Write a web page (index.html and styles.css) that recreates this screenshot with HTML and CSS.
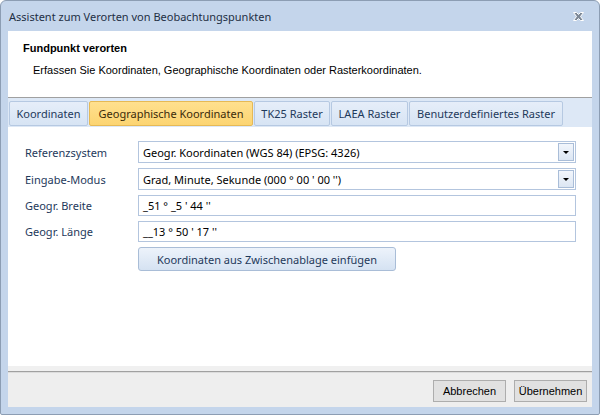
FILE: index.html
```html
<!DOCTYPE html>
<html lang="de">
<head>
<meta charset="utf-8">
<title>Assistent zum Verorten von Beobachtungspunkten</title>
<link rel="stylesheet" href="styles.css">
</head>
<body>
<div class="window">
  <div class="titlebar">
    <span class="title">Assistent zum Verorten von Beobachtungspunkten</span>
    <span class="close" aria-label="Schließen">
      <svg width="13" height="11" viewBox="0 0 13 11">
        <path d="M1.5 1.5 L4.5 1.5 L6.5 3.5 L8.5 1.5 L11.5 1.5 L8.5 5.5 L11.5 9.5 L8.5 9.5 L6.5 7.5 L4.5 9.5 L1.5 9.5 L4.5 5.5 Z" fill="#7d8896" stroke="#ffffff" stroke-width="1" stroke-linejoin="round"/>
      </svg>
    </span>
  </div>
  <div class="client">
    <div class="header">
      <div class="header-title">Fundpunkt verorten</div>
      <div class="header-desc">Erfassen Sie Koordinaten, Geographische Koordinaten oder Rasterkoordinaten.</div>
    </div>
    <div class="tabstrip">
      <div class="tab tab-koord">Koordinaten</div>
      <div class="tab tab-geo active">Geographische Koordinaten</div>
      <div class="tab tab-tk25">TK25 Raster</div>
      <div class="tab tab-laea">LAEA Raster</div>
      <div class="tab tab-user">Benutzerdefiniertes Raster</div>
    </div>
    <div class="panel">
      <div class="form">
        <label class="label">Referenzsystem</label>
        <div class="combo">
          <span class="combo-text">Geogr. Koordinaten (WGS 84) (EPSG: 4326)</span>
          <span class="combo-btn"><span class="arrow"></span></span>
        </div>
        <label class="label">Eingabe-Modus</label>
        <div class="combo">
          <span class="combo-text">Grad, Minute, Sekunde (000 ° 00 ' 00 '')</span>
          <span class="combo-btn"><span class="arrow"></span></span>
        </div>
        <label class="label">Geogr. Breite</label>
        <div class="field">_51 ° _5 ' 44 ''</div>
        <label class="label">Geogr. Länge</label>
        <div class="field">__13 ° 50 ' 17 ''</div>
        <span></span>
        <div class="btn-row"><button class="btn-paste">Koordinaten aus Zwischenablage einfügen</button></div>
      </div>
    </div>
    <div class="footer">
      <button class="btn">Abbrechen</button>
      <button class="btn">Übernehmen</button>
    </div>
  </div>
</div>
</body>
</html>
```
FILE: styles.css
```css
* { box-sizing: border-box; }
html, body {
  margin: 0;
  padding: 0;
  width: 600px;
  height: 415px;
  overflow: hidden;
  background: #ffffff;
}
.window {
  width: 600px;
  height: 415px;
  display: flex;
  flex-direction: column;
  background: #c4d5eb;
  border: 1px solid #8c9db3;
  border-radius: 6px 6px 2px 2px;
  padding: 0 7px 7px 7px;
}
.titlebar {
  height: 30px;
  display: flex;
  align-items: center;
  justify-content: space-between;
  padding: 0 6px 0 1px;
}
.title {
  font-family: "Noto Sans", "Open Sans", sans-serif;
  font-size: 11px;
  color: #1e2f44;
  padding-top: 1px;
}
.close {
  display: flex;
  width: 14px;
  height: 12px;
  margin-top: 2px;
}
.client {
  flex: 1;
  display: flex;
  flex-direction: column;
  background: #ffffff;
}
.header {
  height: 67px;
  flex: none;
  background: #ffffff;
  border-bottom: 1px solid #a0a0a0;
  padding: 11px 0 0 15px;
  font-family: "Liberation Sans", Arial, sans-serif;
  font-size: 11px;
  color: #000000;
}
.header-title {
  font-weight: bold;
  font-size: 11px;
  height: 20px;
}
.header-desc {
  padding-left: 10px;
  padding-top: 2px;
}
.tabstrip {
  height: 29px;
  flex: none;
  background: #dde8f6;
  display: flex;
  gap: 1px;
  padding: 3px 0 1px 1px;
}
.tab {
  height: 25px;
  border: 1px solid #b6c9e2;
  border-radius: 2px;
  background: linear-gradient(#e6eef9, #d7e4f4);
  font-family: "Noto Sans", "Open Sans", sans-serif;
  font-size: 11px;
  color: #1e395b;
  display: flex;
  align-items: center;
  justify-content: center;
  white-space: nowrap;
}
.tab.active {
  background: linear-gradient(#ffe08f, #fcd471);
  border-color: #e6b955;
  color: #3b2a0a;
}
.tab-koord { width: 79px; }
.tab-geo { width: 164px; }
.tab-tk25 { width: 76px; }
.tab-laea { width: 77px; }
.tab-user { width: 154px; }
.panel {
  flex: 1;
  background: #ffffff;
  padding: 14px 16px 0 17px;
  border-bottom: 5px solid #f0f0f0;
}
.form {
  display: grid;
  grid-template-columns: 113px 1fr;
  grid-template-rows: 22px 22px 21px 21px 24px;
  row-gap: 5px;
  align-items: center;
}
.label {
  font-family: "Noto Sans", "Open Sans", sans-serif;
  font-size: 11px;
  color: #1e395b;
}
.combo, .field {
  height: 100%;
  border: 1px solid #b3c5de;
  background: #ffffff;
  font-family: "Noto Sans", "Open Sans", sans-serif;
  font-size: 11px;
  color: #000000;
  display: flex;
  align-items: center;
  padding-left: 4px;
}
.combo {
  justify-content: space-between;
  padding-right: 1px;
}
.combo-btn {
  width: 16px;
  height: 18px;
  border: 1px solid #a9bdd8;
  background: linear-gradient(#f2f6fc, #dce6f3);
  display: flex;
  align-items: center;
  justify-content: center;
}
.arrow {
  width: 0;
  height: 0;
  border-left: 3px solid transparent;
  border-right: 3px solid transparent;
  border-top: 3px solid #000000;
  margin-top: 1px;
}
.btn-row {
  height: 100%;
  display: flex;
}
.btn-paste {
  width: 258px;
  height: 24px;
  border: 1px solid #a9bdd7;
  border-radius: 3px;
  background: linear-gradient(#edf3fb, #d5e2f2);
  font-family: "Noto Sans", "Open Sans", sans-serif;
  font-size: 11px;
  color: #1e395b;
  padding: 0;
}
.footer {
  height: 36px;
  flex: none;
  background: #eeeeee;
  border-top: 1px solid #a0a0a0;
  box-shadow: inset 0 1px 0 #dcdcdc;
  display: flex;
  justify-content: flex-end;
  align-items: flex-start;
  gap: 8px;
  padding: 8px 5px 0 0;
}
.btn {
  width: 73px;
  height: 22px;
  border: 1px solid #adadad;
  background: #e1e1e1;
  font-family: "Liberation Sans", Arial, sans-serif;
  font-size: 11px;
  color: #000000;
  padding: 0;
}
```
